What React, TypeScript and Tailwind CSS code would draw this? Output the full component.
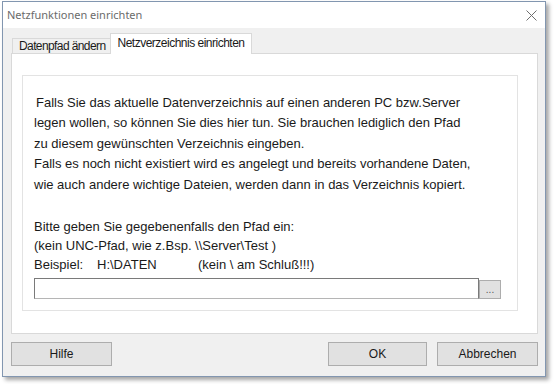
import React from "react";

const sans = { fontFamily: '"Liberation Sans", Arial, sans-serif' };

function WinButton({ label, className }: { label: string; className: string }) {
  return (
    <button
      className={`h-[24px] border border-[#adadad] bg-[#e1e1e1] text-[12px] text-[#1a1a1a] ${className}`}
    >
      {label}
    </button>
  );
}

export default function App() {
  return (
    <div className="h-[384px] w-[556px] bg-white pl-[2px] pt-[1px]" style={sans}>
      <div className="flex h-[376px] w-[544px] flex-col border border-[#8296b0] bg-[#f0f0f0] shadow-[3px_3px_4px_rgba(0,0,0,0.35)]">
        {/* title bar */}
        <div className="flex h-[26px] items-center justify-between bg-white pl-[4px] pr-[7px]">
          <span
            className="text-[11px] text-[#6b6b6b]"
            style={{ fontFamily: '"Noto Sans", "Open Sans", sans-serif' }}
          >
            Netzfunktionen einrichten
          </span>
          <svg width="11" height="11" viewBox="0 0 11 11" className="mr-[1px]">
            <path d="M0.5 0.5 L10.5 10.5 M10.5 0.5 L0.5 10.5" stroke="#6e6e6e" strokeWidth="1" />
          </svg>
        </div>

        <div className="flex flex-1 flex-col pl-[8px] pr-[7px] pt-[5px]">
          {/* tabs */}
          <div className="flex h-[20px] items-end">
            <div className="-mr-px ml-[1px] flex h-[15px] items-center border border-b-0 border-[#d9d9d9] bg-[#f0f0f0] pl-[6px] pr-[5px] text-[12px] tracking-[-0.6px] text-[#1a1a1a]">
              Datenpfad ändern
            </div>
            <div className="relative z-10 -mb-px flex h-[21px] items-center border border-b-0 border-[#d9d9d9] bg-white px-[6px] pb-[2px] text-[12px] tracking-[-0.5px] text-[#1a1a1a]">
              Netzverzeichnis einrichten
            </div>
          </div>

          {/* tab panel */}
          <div className="flex h-[281px] flex-col border border-[#d9d9d9] bg-white pb-[22px] pl-[10px] pr-[19px] pt-[21px]">
            <div className="flex flex-1 flex-col border border-[#e3e3e3] pl-[11px] pr-[16px] pt-[17px] text-[13px] text-[#1a1a1a]">
              <div className="leading-[20px]">
                <div className="ml-[2px]">
                  Falls Sie das aktuelle Datenverzeichnis auf einen anderen PC bzw.Server
                </div>
                <div>legen wollen, so können Sie dies hier tun. Sie brauchen lediglich den Pfad</div>
                <div className="mt-[1px]">zu diesem gewünschten Verzeichnis eingeben.</div>
                <div>Falls es noch nicht existiert wird es angelegt und bereits vorhandene Daten,</div>
                <div className="mt-[1px]">wie auch andere wichtige Dateien, werden dann in das Verzeichnis kopiert.</div>
              </div>
              <div className="mt-[22px] leading-[19px]">
                <div>Bitte geben Sie gegebenenfalls den Pfad ein:</div>
                <div>(kein UNC-Pfad, wie z.Bsp. \\Server\Test )</div>
                <div className="flex">
                  <span className="w-[63px]">Beispiel:</span>
                  <span className="w-[101px]">H:\DATEN</span>
                  <span>(kein \ am Schluß!!!)</span>
                </div>
              </div>
              <div className="mt-[4px] flex items-end">
                <div className="h-[21px] w-[445px] border border-[#7a7a7a] border-b-[#b5b5b5] bg-white" />
                <button className="h-[19px] w-[22px] border border-[#adadad] bg-[#e1e1e1] text-[10px] leading-[14px] text-[#555]">
                  ...
                </button>
              </div>
            </div>
          </div>

          {/* bottom buttons */}
          <div className="mt-[8px] flex items-center">
            <WinButton label="Hilfe" className="w-[101px]" />
            <div className="flex-1" />
            <WinButton label="OK" className="mr-[10px] w-[99px]" />
            <WinButton label="Abbrechen" className="w-[101px]" />
          </div>
        </div>
      </div>
    </div>
  );
}
